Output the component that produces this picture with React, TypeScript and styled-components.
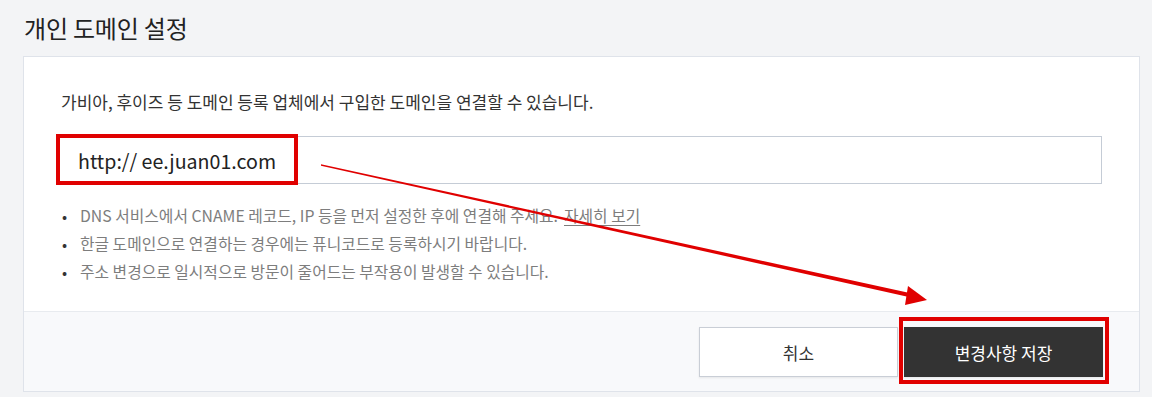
import styled, { createGlobalStyle } from "styled-components";

const GlobalStyle = createGlobalStyle`
  html, body {
    margin: 0;
    padding: 0;
    background: #f3f4f6;
    font-family: "Noto Sans CJK KR", "Noto Sans", sans-serif;
    color: #222;
  }
  * { box-sizing: border-box; }
`;

const Page = styled.div`
  position: relative;
  width: 1152px;
  height: 397px;
  padding: 0 12px 5px 23px;
  overflow: hidden;
`;

const Title = styled.h2`
  margin: 0;
  height: 56px;
  padding: 0 0 2px 1px;
  display: flex;
  align-items: center;
  font-size: 24px;
  font-weight: 400;
  color: #222;
  letter-spacing: -0.2px;
`;

const Card = styled.section`
  border: 1px solid #dfe3ea;
  background: #fff;
`;

const CardBody = styled.div`
  padding: 34px 37px 25px 35px;
`;

const Intro = styled.p`
  margin: 0 0 23px 2px;
  font-size: 17px;
  line-height: 22px;
  color: #333;
`;

const DomainInput = styled.input`
  display: block;
  width: 100%;
  height: 48px;
  padding: 0 18px;
  border: 1px solid #c5ccd6;
  font-family: inherit;
  font-size: 19.6px;
  color: #222;
  outline: none;
`;

const Notes = styled.ul`
  margin: 18px 0 0;
  padding: 0 0 0 3px;
  list-style: none;
`;

const Note = styled.li`
  display: flex;
  font-size: 15.8px;
  line-height: 28px;
  color: #7d7d7d;
  &::before {
    content: "•";
    width: 18px;
    color: #333;
    font-size: 15px;
  }
`;

const More = styled.a`
  margin-left: 6px;
  color: #7d7d7d;
  text-decoration: underline;
  text-underline-offset: 3px;
`;

const Footer = styled.div`
  display: flex;
  justify-content: flex-end;
  gap: 6px;
  height: 80px;
  padding: 15px 36px 0 0;
  border-top: 1px solid #e8ebef;
  background: #f8f9fb;
`;

const Button = styled.button<{ $primary?: boolean }>`
  width: 199px;
  height: 50px;
  border: 1px solid ${(p) => (p.$primary ? "#333" : "#c9ced6")};
  background: ${(p) => (p.$primary ? "#333" : "#fff")};
  color: ${(p) => (p.$primary ? "#fff" : "#333")};
  font-family: inherit;
  font-size: 17px;
  box-shadow: 0 1px 2px rgba(0, 0, 0, 0.08);
  cursor: pointer;
`;

const Markup = styled.svg`
  position: absolute;
  left: 0;
  top: 0;
  pointer-events: none;
`;

export default function App() {
  return (
    <>
      <GlobalStyle />
      <Page>
        <Title>개인 도메인 설정</Title>
        <Card>
          <CardBody>
            <Intro>가비아, 후이즈 등 도메인 등록 업체에서 구입한 도메인을 연결할 수 있습니다.</Intro>
            <DomainInput defaultValue="http:// ee.juan01.com" />
            <Notes>
              <Note>
                DNS 서비스에서 CNAME 레코드, IP 등을 먼저 설정한 후에 연결해 주세요.
                <More>자세히 보기</More>
              </Note>
              <Note>한글 도메인으로 연결하는 경우에는 퓨니코드로 등록하시기 바랍니다.</Note>
              <Note>주소 변경으로 일시적으로 방문이 줄어드는 부작용이 발생할 수 있습니다.</Note>
            </Notes>
          </CardBody>
          <Footer>
            <Button>취소</Button>
            <Button $primary>변경사항 저장</Button>
          </Footer>
        </Card>
        <Markup width="1152" height="397" viewBox="0 0 1152 397">
          <rect x="58" y="136" width="238" height="47" fill="none" stroke="#e00000" strokeWidth="4" />
          <rect x="901" y="319" width="206" height="63" fill="none" stroke="#e00000" strokeWidth="4" />
          <polygon points="321,164.3 321,165.7 911,297.5 912,293.5" fill="#e00000" />
          <polygon points="927,300 908,286 905,305" fill="#e00000" />
        </Markup>
      </Page>
    </>
  );
}
